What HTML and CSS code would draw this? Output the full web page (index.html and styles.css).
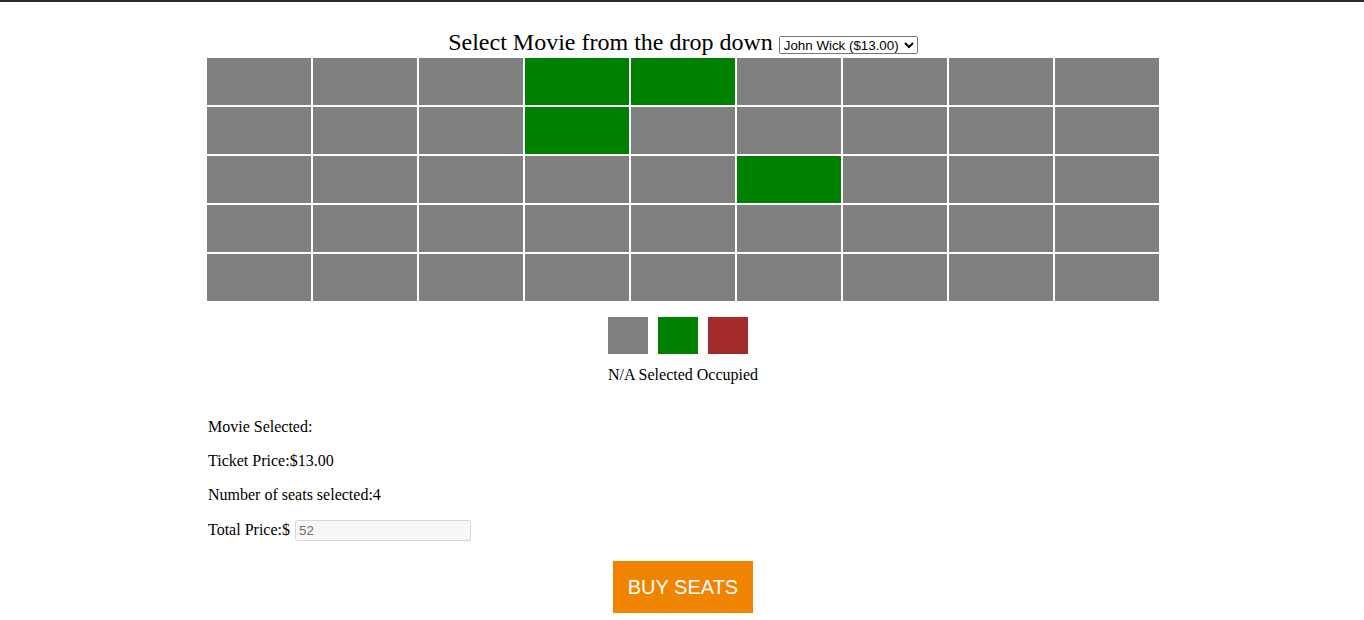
FILE: index.html
```html
<!DOCTYPE html>
<html lang="en">
<head>
<meta charset="utf-8">
<title>Movie Seat Booking</title>
<link rel="stylesheet" href="styles.css">
</head>
<body>
<div class="page">
  <div class="title">Select Movie from the drop down <select class="movie-select">
      <option>John Wick ($13.00)</option>
      <option>Avengers ($10.00)</option>
    </select></div>

  <div class="seats">
    <div class="seat"></div><div class="seat"></div><div class="seat"></div><div class="seat selected"></div><div class="seat selected"></div><div class="seat"></div><div class="seat"></div><div class="seat"></div><div class="seat"></div>
    <div class="seat"></div><div class="seat"></div><div class="seat"></div><div class="seat selected"></div><div class="seat"></div><div class="seat"></div><div class="seat"></div><div class="seat"></div><div class="seat"></div>
    <div class="seat"></div><div class="seat"></div><div class="seat"></div><div class="seat"></div><div class="seat"></div><div class="seat selected"></div><div class="seat"></div><div class="seat"></div><div class="seat"></div>
    <div class="seat"></div><div class="seat"></div><div class="seat"></div><div class="seat"></div><div class="seat"></div><div class="seat"></div><div class="seat"></div><div class="seat"></div><div class="seat"></div>
    <div class="seat"></div><div class="seat"></div><div class="seat"></div><div class="seat"></div><div class="seat"></div><div class="seat"></div><div class="seat"></div><div class="seat"></div><div class="seat"></div>
  </div>

  <div class="legend">
    <div class="swatches">
      <span class="swatch na"></span><span class="swatch sel"></span><span class="swatch occ"></span>
    </div>
    <div class="legend-text">N/A Selected Occupied</div>
  </div>

  <div class="info">
    <p>Movie Selected:</p>
    <p>Ticket Price:$13.00</p>
    <p>Number of seats selected:4</p>
    <p>Total Price:$ <input class="total" type="text" value="52" readonly></p>
  </div>

  <div class="actions">
    <button class="buy">BUY SEATS</button>
  </div>
</div>
</body>
</html>
```

FILE: styles.css
```css
html, body {
  margin: 0;
  padding: 0;
  background: #ffffff;
}

body {
  border-top: 2px solid #2b2b2b;
  font-family: "Liberation Serif", "Times New Roman", serif;
  font-size: 16px;
  color: #000;
}

.page {
  padding-left: 2px;
}

.title {
  padding-top: 25px;
  line-height: 30px;
  height: 30px;
  margin-bottom: 1px;
  font-size: 24px;
  text-align: center;
}

.movie-select {
  font-family: "Liberation Sans", Arial, sans-serif;
  font-size: 13.33px;
  height: 18px;
  width: 139px;
  vertical-align: baseline;
}

.seats {
  display: grid;
  grid-template-columns: repeat(9, 104px);
  grid-auto-rows: 47px;
  gap: 2px;
  justify-content: center;
}

.seat {
  background: #808080;
}

.seat.selected {
  background: #008000;
}

.legend {
  margin-top: 16px;
  text-align: center;
}

.swatches {
  display: flex;
  justify-content: center;
}

.swatch {
  width: 40px;
  height: 37px;
  margin-right: 10px;
}

.swatch.na { background: #808080; }
.swatch.sel { background: #008000; }
.swatch.occ { background: #a52a2a; }

.legend-text {
  margin-top: 12px;
  line-height: 18px;
}

.info {
  width: 951px;
  padding-left: 1px;
  margin: 34px auto 0;
}

.info p {
  margin: 0 0 16px;
  line-height: 18px;
}

.total {
  box-sizing: border-box;
  width: 176px;
  height: 21px;
  margin-left: 1px;
  padding: 1px 3px;
  border: 1px solid #d8d8d8;
  border-radius: 2px;
  background: #f7f7f7;
  color: #6d6d6d;
  font-family: "Liberation Sans", Arial, sans-serif;
  font-size: 13.33px;
  vertical-align: baseline;
}

.actions {
  display: flex;
  justify-content: center;
  margin-top: 20px;
}

.buy {
  width: 140px;
  height: 52px;
  border: none;
  background: #f08400;
  color: #fff;
  font-family: "Liberation Sans", Arial, sans-serif;
  font-size: 20px;
  padding: 0;
}
```
